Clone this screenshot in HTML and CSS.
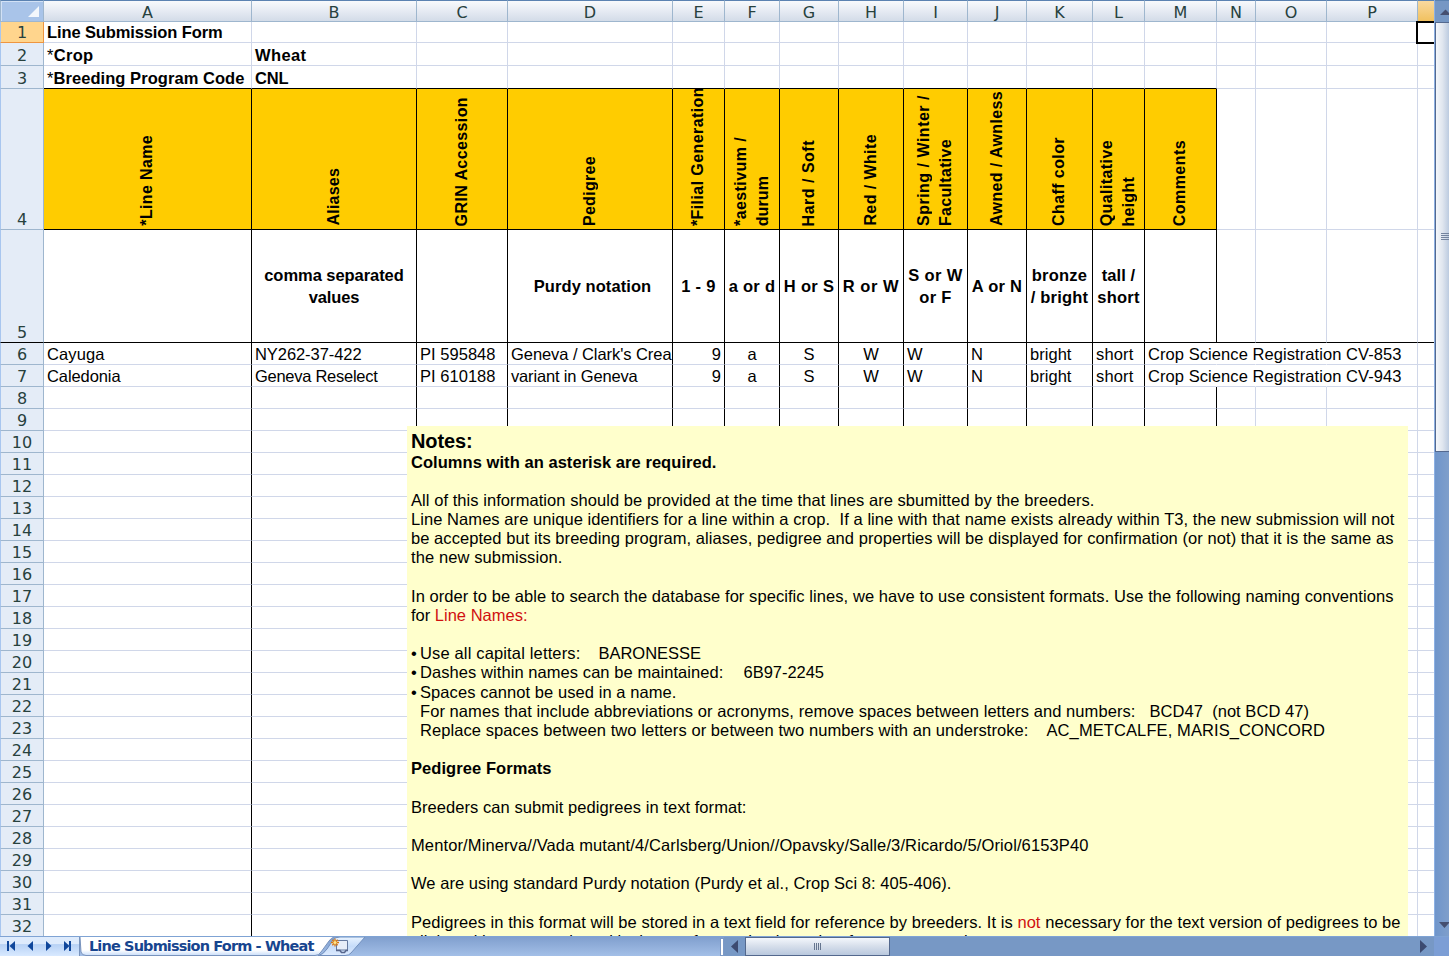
FILE: index.html
```html
<!DOCTYPE html>
<html lang="en">
<head>
<meta charset="utf-8">
<title>Line Submission Form</title>
<link rel="stylesheet" href="styles.css">
</head>
<body>
<div class="app">
  <div class="work">
    <div class="sheet">
      <div class="grid" id="grid"></div>
      <div class="selection"></div>
      <div class="notes">
        <p class="title"><span data-w="61">Notes:</span></p>
        <p class="sub"><b data-w="305">Columns with an asterisk are required.</b></p>
        <p></p>
        <p><span data-w="683">All of this information should be provided at the time that lines are sbumitted by the breeders.</span></p>
        <p><span data-w="983">Line Names are unique identifiers for a line within a crop.&nbsp; If a line with that name exists already within T3, the new submission will not</span></p>
        <p><span data-w="982">be accepted but its breeding program, aliases, pedigree and properties will be displayed for confirmation (or not) that it is the same as</span></p>
        <p><span data-w="151">the new submission.</span></p>
        <p></p>
        <p><span data-w="982">In order to be able to search the database for specific lines, we have to use consistent formats. Use the following naming conventions</span></p>
        <p><span data-w="116">for <i class="red">Line Names:</i></span></p>
        <p></p>
        <p class="item"><span class="dot">•</span><span data-w="160">Use all capital letters:</span><span class="eg eg-a" data-w="102">BARONESSE</span></p>
        <p class="item"><span class="dot">•</span><span data-w="303">Dashes within names can be maintained:</span><span class="eg eg-b" data-w="80">6B97-2245</span></p>
        <p class="item"><span class="dot">•</span><span data-w="256">Spaces cannot be used in a name.</span></p>
        <p class="item"><span class="dot"></span><span data-w="715">For names that include abbreviations or acronyms, remove spaces between letters and numbers:</span><span class="eg eg-c" data-w="159">BCD47&nbsp; (not BCD 47)</span></p>
        <p class="item"><span class="dot"></span><span data-w="608">Replace spaces between two letters or between two numbers with an understroke:</span><span class="eg eg-a" data-w="278">AC_METCALFE, MARIS_CONCORD</span></p>
        <p></p>
        <p><b data-w="140">Pedigree Formats</b></p>
        <p></p>
        <p><span data-w="335">Breeders can submit pedigrees in text format:</span></p>
        <p></p>
        <p><span data-w="677">Mentor/Minerva//Vada mutant/4/Carlsberg/Union//Opavsky/Salle/3/Ricardo/5/Oriol/6153P40</span></p>
        <p></p>
        <p><span data-w="540">We are using standard Purdy notation (Purdy et al., Crop Sci 8: 405-406).</span></p>
        <p></p>
        <p><span data-w="989">Pedigrees in this format will be stored in a text field for reference by breeders. It is <i class="red">not</i> necessary for the text version of pedigrees to be</span></p>
        <p><span data-w="556">alleles with any record used in the text format that is easiest for entry as read</span></p>
      </div>
    </div>
    <div class="vbar">
      <div class="vtop"><svg width="14" height="22"><path d="M5 14 L10.500 8.500 L16 14Z" fill="#454f70"/></svg></div>
      <div class="vthumb"><i></i><i></i><i></i><i></i></div>
      <div class="vend"><svg width="14" height="18"><path d="M4 4H15L9.500 10Z" fill="#454f70"/></svg></div>
    </div>
  </div>
  <div class="bottom">
    <div class="nav">
      <svg width="79" height="19"><g fill="#10479b"><path d="M7 4h2v10H7zM15 4v10L9.500 9zM33 4v10L27.500 9zM46 4v10L51.500 9zM64 4v10L69.500 9zM69 4h2v10h-2z"/></g></svg>
    </div>
    <div class="tabs">
      <svg class="tabshape" width="295" height="20">
        <defs>
          <linearGradient id="t" x2="0" y2="1"><stop offset="0" stop-color="#fff"/><stop offset=".7" stop-color="#fff"/><stop offset="1" stop-color="#c8ddfa"/></linearGradient>
          <linearGradient id="n" x2="0" y2="1"><stop offset="0" stop-color="#e9f3ff"/><stop offset=".5" stop-color="#c6dcf9"/><stop offset="1" stop-color="#dceaff"/></linearGradient>
        </defs>
        <path d="M238 18.500 Q243 18 247 12 L253 3 Q255 0 260 0 H285 L271 16 Q269 18.500 265 18.500Z" fill="url(#n)" stroke="#718fbd"/>
        <path d="M0 0H254Q251 1 249 4L241 15Q239 18.500 235 18.500H6Q2 18.500 1 15Z" fill="url(#t)"/>
        <path d="M0 0L1 15Q2 18.500 6 18.500H235Q239 18.500 241 15L249 4Q251 1 254 0" fill="none" stroke="#7893bd"/>
        <path d="M256.500 3.500H267.500V13H256.500Z" fill="#e7edf8" stroke="#65799f"/>
        <path d="M256 13.500h4l1.500 2h3l1.500-2h2" fill="none" stroke="#56658c" stroke-width="1.500"/>
        <g stroke="#d97a13" stroke-width="1.300"><path d="M255 1.500v8M251 5.500h8M252.300 2.800l5.400 5.400M257.700 2.800l-5.400 5.400"/></g>
        <circle cx="255" cy="5.500" r="1.600" fill="#ffe68a"/>
      </svg>
      <span class="tabname" data-w="224">Line Submission Form - Wheat</span>
    </div>
    <div class="split"></div>
    <div class="hbar">
      <svg width="23" height="20"><path d="M14 3v13L7 9.500Z" fill="#3c4a70"/></svg>
      <div class="hthumb"><i></i><i></i><i></i><i></i></div>
      <svg class="hright" width="26" height="20"><path d="M12 3v13L19 9.500Z" fill="#3c4a70"/></svg>
    </div>
    <div class="corner"></div>
  </div>
</div>
<script src="sheet.js"></script>
</body>
</html>
```
FILE: styles.css
```css
* { box-sizing: border-box; }
body { margin: 0; font: 16.500px/22px "Liberation Sans", Arial, sans-serif; color: #000; }
i { font-style: normal; }
.app { width: 1449px; height: 956px; overflow: hidden; display: flex; flex-direction: column; }
.work { display: flex; height: 936px; }
.sheet { position: relative; width: 1434px; height: 936px; overflow: hidden; background: #fff; }
.grid {
  display: grid;
  grid-template-columns: 44px 208px 165px 91px 165px 52px 55px 59px 65px 64px 59px 66px 52px 72px 39px 71px 91px 17px;
  grid-template-rows: 22px 21px 23px 23px 141px 113px repeat(27, 22px);
}
.cell { border-right: 1px solid #d0d7e9; border-bottom: 1px solid #d0d7e9; min-width: 0; white-space: nowrap; padding: 0 3px; display: flex; align-items: center; }
.low { padding-top: 2px; }
.cell.last { border-right: 0; }
.cell span { flex: none; }
.light { font-weight: normal; }
.vline { border-right-color: #000; }
.hline { border-bottom-color: #000; }
.open { border-right-color: transparent; }
.bold { font-weight: bold; }
.center { justify-content: center; text-align: center; padding: 0; }
.right { justify-content: flex-end; padding-right: 3px; }
.clip { overflow: hidden; }
.stack { flex-direction: column; justify-content: center; }
.stack.nudge { padding-left: 5px; }
.gold { background: #ffcc00; overflow: hidden; justify-content: center; align-items: flex-end; padding: 0 1px 3px 0; }
.gold span { writing-mode: vertical-rl; transform: rotate(180deg); line-height: 22px; font-size: 16px; }
.colhead, .rowhead { font: 16px/20px "DejaVu Sans", Verdana, sans-serif; color: #27413e; display: flex; justify-content: center; }
.colhead { border-top: 1px solid #5b82b1; border-right: 1px solid #9eb6ce; border-bottom: 1px solid #9eb6ce; background: linear-gradient(#f8fafc, #e6ebf3 50%, #d3dce8); padding-top: 2px; }
.colhead.active { background: linear-gradient(#f9d99f, #f1c15f); border-bottom-color: #ee9540; border-right: 0; }
.rowhead { border-left: 1px solid #a8c6ef; border-right: 1px solid #9eb6ce; border-bottom: 1px solid #9eb6ce; background: #e4ecf7; align-items: flex-end; line-height: 18px; }
.rowhead.active { background: #ffd58d; border-right-color: #ee9540; border-bottom-color: #ee9540; }
.rowhead.hline { border-bottom-color: #000; }
.corner-cell { border: 1px solid #9eb6ce; border-top-color: #5b82b1; background: #a9c4e9; box-shadow: inset 1px 1px #d2e1f5; display: flex; justify-content: flex-end; padding: 5px 3px; }
.selection { position: absolute; left: 1416px; top: 21px; width: 24px; height: 23px; border: 2px solid #000; }

.notes { position: absolute; left: 407px; top: 426px; width: 1001px; height: 510px; background: #ffffcc; padding: 4px 4px 0; overflow: hidden; }
.notes p { margin: 0; height: 19.190px; line-height: 19.190px; white-space: pre; }
.notes .title { font-size: 20px; font-weight: bold; height: 22px; line-height: 22px; }
.notes .sub { height: 19.500px; line-height: 20px; }
.notes .item { display: flex; }
.dot { width: 9px; flex: none; }
.eg-a { margin-left: 18px; }
.eg-b { margin-left: 20px; }
.eg-c { margin-left: 14px; }
.red { color: #d01010; }

.vbar { width: 15px; background: linear-gradient(90deg, #6f95cb, #7f9fcb); border-left: 1px solid #8cb0e3; display: flex; flex-direction: column; }
.vtop { height: 22px; border-top: 1px solid #5b82b1; background: #7697c4; overflow: hidden; }
.vthumb { height: 430px; border: 1px solid #54698f; border-right: 0; background: linear-gradient(90deg, #f4f7fb, #e0e6ef 50%, #bccbe0); display: flex; flex-direction: column; justify-content: center; gap: 1px; padding: 0 0 2px 5px; }
.vthumb i { height: 1px; background: #73839e; }
.vend { margin-top: auto; height: 18px; overflow: hidden; }

.bottom { height: 20px; display: flex; border-top: 1px solid #7fa3d4; background: linear-gradient(#809fce, #a3bfe7); }
.nav { width: 80px; background: linear-gradient(#deebfc 0 35%, #b8d2f5 40%, #d8e9ff); border-right: 1px solid #7893bd; }
.nav svg, .vbar svg, .bottom svg { display: block; flex: none; }
.tabs { width: 640px; position: relative; }
.tabname { position: absolute; left: 9px; top: -1px; font: bold 14.500px/20px "DejaVu Sans", Verdana, sans-serif; color: #17458f; white-space: nowrap; }
.split { width: 4px; margin-top: 1px; background: #fff; border: 1px solid #7b99c6; flex: none; }
.hbar { width: 710px; display: flex; background: #7798c5; }
.hthumb { width: 145px; margin-left: -2px; border: 1px solid #53688d; background: linear-gradient(#f4f7fc, #d8e0ec 45%, #b9c8de); display: flex; justify-content: center; align-items: center; gap: 1px; }
.hthumb i { width: 1px; height: 7px; background: #65758f; }
.hright { margin-left: auto; }
.corner { width: 15px; background: #7c9ed5; }
```
FILE: sheet.js
```js
// Cell text is [text, width]; the width sets the letter spacing of the line.
const letters = ['A','B','C','D','E','F','G','H','I','J','K','L','M','N','O','P',''];
const rows = {
  1: { A: [['Line Submission Form', 175]] },
  2: { A: [['<i class="light">*</i>Crop', 46]], B: [['Wheat', 51]] },
  3: { A: [['<i class="light">*</i>Breeding Program Code', 197]], B: [['CNL', 33]] },
  4: {
    A: [['*Line Name', 90]], B: [['Aliases', 57]], C: [['GRIN Accession', 129]], D: [['Pedigree', 70]],
    E: [['*Filial Generation', 139]], F: [['*aestivum /', 88], ['durum', 50]], G: [['Hard / Soft', 86]],
    H: [['Red / White', 91]], I: [['Spring / Winter /', 131], ['Facultative', 87]], J: [['Awned / Awnless', 135]],
    K: [['Chaff color', 88]], L: [['Qualitative', 86], ['height', 49]], M: [['Comments', 86]]
  },
  5: {
    B: [['comma separated', 139], ['values', 50]], D: [['Purdy notation', 117]], E: [['1 - 9', 34]],
    F: [['a or d', 46]], G: [['H or S', 50]], H: [['R or W', 56]], I: [['S or W', 54], ['or F', 32]],
    J: [['A or N', 50]], K: [['bronze', 55], ['/ bright', 57]], L: [['tall /', 33], ['short', 42]]
  },
  6: {
    A: [['Cayuga', 57]], B: [['NY262-37-422', 106]], C: [['PI 595848', 75]], D: [["Geneva / Clark's Crea", 160]],
    E: [['9', 9]], F: [['a', 9]], G: [['S', 11]], H: [['W', 15]], I: [['W', 15]], J: [['N', 12]],
    K: [['bright', 41]], L: [['short', 37]], M: [['Crop Science Registration CV-853', 253]]
  },
  7: {
    A: [['Caledonia', 73]], B: [['Geneva Reselect', 122]], C: [['PI 610188', 75]], D: [['variant in Geneva', 126]],
    E: [['9', 9]], F: [['a', 9]], G: [['S', 11]], H: [['W', 15]], I: [['W', 15]], J: [['N', 12]],
    K: [['bright', 41]], L: [['short', 37]], M: [['Crop Science Registration CV-943', 253]]
  }
};

let html = '<div class="corner-cell"><svg width="12" height="12"><path d="M11 0V11H0Z" fill="#f3f7fc"/></svg></div>';
html += letters.map(l => `<div class="colhead${l ? '' : ' active'}">${l}</div>`).join('');
for (let r = 1; r <= 32; r++) {
  html += `<div class="rowhead${r === 1 ? ' active' : ''}${r === 5 ? ' hline' : ''}">${r}</div>`;
  letters.forEach((l, c) => {
    const cls = ['cell'];
    const text = (rows[r] && rows[r][l]) || [];
    const record = r === 6 || r === 7;
    if (c === 16) cls.push('last');
    if (r === 2 || r === 3) cls.push('low');
    if (r <= 5) cls.push('bold');
    if ((r >= 4 && c <= 12) || (r > 5 && c === 0)) cls.push('vline');
    if (((r === 3 || r === 4) && c <= 12) || r === 5) cls.push('hline');
    if (r === 4 && c <= 12) cls.push('gold');
    if (r === 5) cls.push('center', 'stack');
    if (r === 5 && c === 3) cls.push('nudge');
    if (record && c >= 12 && c <= 14) cls.push('open');
    if (record && c >= 5 && c <= 7) cls.push('center');
    if (record && c === 4) cls.push('right');
    if (r === 6 && c === 3) cls.push('clip');
    html += `<div class="${cls.join(' ')}">${text.map(t => `<span data-w="${t[1]}">${t[0]}</span>`).join('')}</div>`;
  });
}
document.getElementById('grid').innerHTML = html;

document.querySelectorAll('[data-w]').forEach(el => {
  el.style.display = 'inline-block';
  const vertical = el.parentElement.classList.contains('gold');
  const size = vertical ? el.offsetHeight : el.getBoundingClientRect().width;
  const n = el.textContent.length;
  if (n > 1) el.style.letterSpacing = ((Number(el.dataset.w) + 0.5 - size) / n).toFixed(3) + 'px';
});
```
